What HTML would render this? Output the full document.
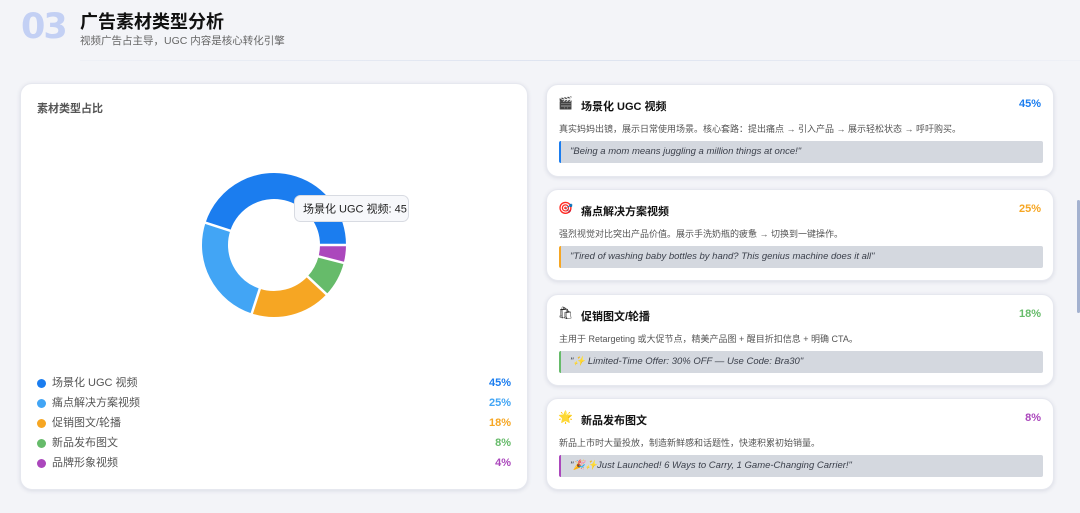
<!DOCTYPE html>
<html><head><meta charset="utf-8"><style>
*{margin:0;padding:0;box-sizing:border-box}
body{width:1080px;height:513px;overflow:hidden;background:#f3f4f8;font-family:"Liberation Sans","Noto Sans CJK SC",sans-serif;position:relative;color:#222}
.abs{position:absolute}
.num{left:21px;top:7px;font-size:35px;font-weight:bold;color:#c3d0f4;letter-spacing:-2px;font-family:"DejaVu Sans",sans-serif}
.title{left:80px;top:8px;font-size:18px;font-weight:bold;color:#111}
.sub{left:80px;top:33px;font-size:10.5px;color:#666}
.div{left:80px;top:60px;width:1000px;height:1px;background:linear-gradient(90deg,#eef0f6,#dde3f0 50%,#eef0f6)}
.card{background:#fff;border-radius:12px;box-shadow:0 1px 4px rgba(40,50,90,.12);border:1px solid #e6e8ef}
.lt{left:37px;top:100px;font-size:11px;font-weight:bold;color:#555}
.lg{left:37px;width:474px;height:14px;font-size:11px;color:#555;line-height:14px}
.lg i{position:absolute;left:0;top:3px;width:9px;height:9px;border-radius:50%}
.lg span{position:absolute;left:15px}
.lg b{position:absolute;right:0;font-size:11px}
.rc{left:546px;width:508px}
.rc .ic{position:absolute;left:11px;top:11px;font-size:12px;font-family:"DejaVu Sans",sans-serif}
.rc .t{position:absolute;left:34px;top:13px;font-size:11px;font-weight:bold;color:#111}
.rc .p{position:absolute;right:12px;top:13px;font-size:11px;font-weight:bold}
.rc .d{position:absolute;left:12px;top:37px;font-size:9px;color:#555}
.rc .q{position:absolute;left:12px;top:56px;width:484px;height:22px;background:#d4d8df;border-radius:2px;border-left:2px solid;font-size:9.5px;font-style:italic;color:#3a3f4a;line-height:22px;padding-left:9px}
</style></head><body>
<div class="abs num">03</div>
<div class="abs title">广告素材类型分析</div>
<div class="abs sub">视频广告占主导，UGC 内容是核心转化引擎</div>
<div class="abs div"></div>

<div class="abs card" style="left:20px;top:83px;width:508px;height:407px"></div>
<div class="abs lt">素材类型占比</div>
<svg class="abs" style="left:0;top:0" width="540" height="513">
<g fill="none" stroke-width="26">
<circle cx="274" cy="245" r="59" stroke="#1b7def" stroke-dasharray="166.82 400" transform="rotate(-162 274 245)"/>
<circle cx="274" cy="245" r="59" stroke="#ab47bc" stroke-dasharray="14.83 400"/>
<circle cx="274" cy="245" r="59" stroke="#66bb6a" stroke-dasharray="29.66 400" transform="rotate(14.4 274 245)"/>
<circle cx="274" cy="245" r="59" stroke="#f6a623" stroke-dasharray="66.73 400" transform="rotate(43.2 274 245)"/>
<circle cx="274" cy="245" r="59" stroke="#42a5f5" stroke-dasharray="92.68 400" transform="rotate(108 274 245)"/>
</g>
<g stroke="#fff" stroke-width="2.5">
<line x1="274" y1="200" x2="274" y2="170" transform="rotate(-72 274 245)"/>
<line x1="274" y1="200" x2="274" y2="170" transform="rotate(90 274 245)"/>
<line x1="274" y1="200" x2="274" y2="170" transform="rotate(104.4 274 245)"/>
<line x1="274" y1="200" x2="274" y2="170" transform="rotate(133.2 274 245)"/>
<line x1="274" y1="200" x2="274" y2="170" transform="rotate(198 274 245)"/>
</g>
<rect x="294.5" y="195.5" width="114" height="26" rx="6" fill="#f7f8fb" stroke="#d8dbe2"/>
<text x="303" y="212.5" font-size="11" fill="#222" font-family="Liberation Sans,Noto Sans CJK SC,sans-serif">场景化 UGC 视频: 45</text>
</svg>
<div class="abs lg" style="top:376px"><i style="background:#1b7def"></i><span>场景化 UGC 视频</span><b style="color:#1b7def">45%</b></div>
<div class="abs lg" style="top:396px"><i style="background:#42a5f5"></i><span>痛点解决方案视频</span><b style="color:#42a5f5">25%</b></div>
<div class="abs lg" style="top:416px"><i style="background:#f6a623"></i><span>促销图文/轮播</span><b style="color:#f6a623">18%</b></div>
<div class="abs lg" style="top:436px"><i style="background:#66bb6a"></i><span>新品发布图文</span><b style="color:#66bb6a">8%</b></div>
<div class="abs lg" style="top:456px"><i style="background:#ab47bc"></i><span>品牌形象视频</span><b style="color:#ab47bc">4%</b></div>

<div class="abs card rc" style="top:84px;height:93px"><div class="ic">🎬</div><div class="t">场景化 UGC 视频</div><div class="p" style="color:#1b7def">45%</div><div class="d">真实妈妈出镜，展示日常使用场景。核心套路：提出痛点 → 引入产品 → 展示轻松状态 → 呼吁购买。</div><div class="q" style="border-color:#1b7def">"Being a mom means juggling a million things at once!"</div></div>
<div class="abs card rc" style="top:189px;height:92px"><div class="ic">🎯</div><div class="t">痛点解决方案视频</div><div class="p" style="color:#f6a623">25%</div><div class="d">强烈视觉对比突出产品价值。展示手洗奶瓶的疲惫 → 切换到一键操作。</div><div class="q" style="border-color:#f6a623">"Tired of washing baby bottles by hand? This genius machine does it all"</div></div>
<div class="abs card rc" style="top:294px;height:92px"><div class="ic">🛍</div><div class="t">促销图文/轮播</div><div class="p" style="color:#66bb6a">18%</div><div class="d">主用于 Retargeting 或大促节点，精美产品图 + 醒目折扣信息 + 明确 CTA。</div><div class="q" style="border-color:#66bb6a">"✨ Limited-Time Offer: 30% OFF — Use Code: Bra30"</div></div>
<div class="abs card rc" style="top:398px;height:92px"><div class="ic">🌟</div><div class="t">新品发布图文</div><div class="p" style="color:#ab47bc">8%</div><div class="d">新品上市时大量投放，制造新鲜感和话题性，快速积累初始销量。</div><div class="q" style="border-color:#ab47bc">"🎉✨Just Launched! 6 Ways to Carry, 1 Game-Changing Carrier!"</div></div>

<div class="abs" style="left:1077px;top:200px;width:3px;height:113px;background:#a3b1cf;border-radius:2px"></div>
</body></html>
